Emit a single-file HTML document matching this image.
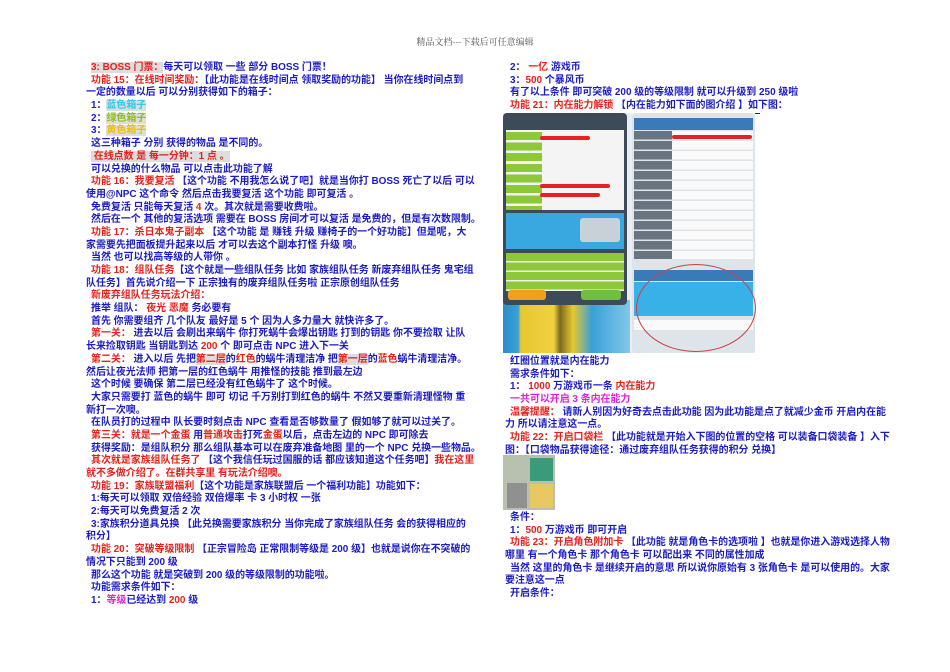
<!DOCTYPE html>
<html><head><meta charset="utf-8"><style>
body{margin:0;background:#fff;width:950px;height:672px;overflow:hidden;position:relative;font-family:"Liberation Sans","Noto Sans CJK SC",sans-serif;}
.hd{position:absolute;top:35px;left:0;width:950px;text-align:center;font:9px "Noto Serif CJK SC",serif;color:#555}
.col{position:absolute;font-size:9.95px;font-weight:bold;color:#1c1cc4;line-height:12.7px;white-space:nowrap}
.col div{height:12.7px}
.r{color:#e8201c}.m{color:#e020d8}.c{color:#30c8ec;background:#ddd}.g{color:#8cc020;background:#ddd}.y{color:#f0c000;background:#ddd}.hl{background:#ddd}
.i{padding-left:5px}
.bx{position:absolute}
</style></head><body>
<div class="hd">精品文档---下载后可任意编辑</div>
<div class="col" style="left:86px;top:62px">
<div class="i"><span class="r hl">3: BOSS 门票：</span>每天可以领取 一些 部分 BOSS 门票！</div>
<div class="i"><span class="r">功能 15：在线时间奖励：</span>【此功能是在线时间点 领取奖励的功能】 当你在线时间点到</div>
<div>一定的数量以后 可以分别获得如下的箱子：</div>
<div class="i">1：<span class="c">蓝色箱子</span></div>
<div class="i">2：<span class="g">绿色箱子</span></div>
<div class="i">3：<span class="y">黄色箱子</span></div>
<div class="i">这三种箱子 分别 获得的物品 是不同的。</div>
<div class="i"><span class="r hl">&nbsp;在线点数 是 每一分钟：1 点 。</span></div>
<div class="i">可以兑换的什么物品 可以点击此功能了解</div>
<div class="i"><span class="r">功能 16：我要复活</span> 【这个功能 不用我怎么说了吧】就是当你打 BOSS 死亡了以后 可以</div>
<div>使用@NPC 这个命令 然后点击我要复活 这个功能 即可复活 。</div>
<div class="i">免费复活 只能每天复活 <span class="r">4</span> 次。其次就是需要收费啦。</div>
<div class="i">然后在一个 其他的复活选项 需要在 BOSS 房间才可以复活 是免费的，但是有次数限制。</div>
<div class="i"><span class="r">功能 17：杀日本鬼子副本</span> 【这个功能 是 赚钱 升级 赚椅子的一个好功能】但是呢，大</div>
<div>家需要先把面板提升起来以后 才可以去这个副本打怪 升级 噢。</div>
<div class="i">当然 也可以找高等级的人带你 。</div>
<div class="i"><span class="r">功能 18：组队任务</span>【这个就是一些组队任务 比如 家族组队任务 新废弃组队任务 鬼宅组</div>
<div>队任务】首先说介绍一下 正宗独有的废弃组队任务啦 正宗原创组队任务</div>
<div class="i"><span class="r">新废弃组队任务玩法介绍：</span></div>
<div class="i">推举 组队： <span class="r">夜光 恶魔</span> 务必要有</div>
<div class="i">首先 你需要组齐 几个队友 最好是 5 个 因为人多力量大 就快许多了。</div>
<div class="i"><span class="r">第一关：</span> 进去以后 会刷出来蜗牛 你打死蜗牛会爆出钥匙 打到的钥匙 你不要捡取 让队</div>
<div>长来捡取钥匙 当钥匙到达 <span class="r">200</span> 个 即可点击 NPC 进入下一关</div>
<div class="i"><span class="r">第二关：</span> 进入以后 先把<span class="r hl">第二层</span>的<span class="r">红色</span>的蜗牛清理洁净 把<span class="r hl">第一层</span>的<span class="r">蓝色</span>蜗牛清理洁净。</div>
<div>然后让夜光法师 把第一层的红色蜗牛 用推怪的技能 推到最左边</div>
<div class="i">这个时候 要确保 第二层已经没有红色蜗牛了 这个时候。</div>
<div class="i">大家只需要打 蓝色的蜗牛 即可 切记 千万别打到红色的蜗牛 不然又要重新清理怪物 重</div>
<div>新打一次噢。</div>
<div class="i">在队员打的过程中 队长要时刻点击 NPC 查看是否够数量了 假如够了就可以过关了。</div>
<div class="i"><span class="r">第三关：就是一个金蛋</span> 用<span class="r">普通攻击</span>打死<span class="r">金蛋</span>以后，点击左边的 NPC 即可除去</div>
<div class="i">获得奖励：是组队积分 那么组队基本可以在废弃准备地图 里的一个 NPC 兑换一些物品。</div>
<div class="i"><span class="r">其次就是家族组队任务了</span> 【这个我信任玩过国服的话 都应该知道这个任务吧】<span class="r">我在这里</span></div>
<div class="r">就不多做介绍了。在群共享里 有玩法介绍噢。</div>
<div class="i"><span class="r">功能 19：家族联盟福利</span>【这个功能是家族联盟后 一个福利功能】功能如下：</div>
<div class="i">1:每天可以领取 双倍经验 双倍爆率 卡 3 小时权 一张</div>
<div class="i">2:每天可以免费复活 2 次</div>
<div class="i">3:家族积分道具兑换 【此兑换需要家族积分 当你完成了家族组队任务 会的获得相应的</div>
<div>积分】</div>
<div class="i"><span class="r">功能 20：突破等级限制</span> 【正宗冒险岛 正常限制等级是 200 级】也就是说你在不突破的</div>
<div>情况下只能到 200 级</div>
<div class="i">那么这个功能 就是突破到 200 级的等级限制的功能啦。</div>
<div class="i">功能需求条件如下：</div>
<div class="i">1：<span class="m">等级</span>已经达到 <span class="r">200</span> 级</div>
</div>

<div class="col" style="left:505px;top:62px">
<div class="i">2： <span class="r">一亿</span> 游戏币</div>
<div class="i">3：<span class="r">500</span> 个暴风币</div>
<div class="i">有了以上条件 即可突破 200 级的等级限制 就可以升级到 250 级啦</div>
<div class="i" style="border-bottom:1px solid #1c1cc4;width:250px"><span class="r">功能 21：内在能力解锁</span> 【内在能力如下面的图介绍 】如下图：</div>
</div>

<!-- game screenshot -->
<div class="bx" style="left:503px;top:113px;width:252px;height:240px;background:#e8eef2"></div>
<div class="bx" style="left:503px;top:300px;width:127px;height:53px;background:linear-gradient(90deg,#2a8ec8 0,#3aa0d8 12%,#e8c830 14%,#f0d040 40%,#7a6a20 45%,#e8c830 55%,#3aa0d8 70%,#80c8e8 100%)"></div>
<div class="bx" style="left:503px;top:113px;width:124px;height:192px;background:#3d4a58;border-radius:4px"></div>
<div class="bx" style="left:506px;top:130px;width:118px;height:80px;background:#f4f4f4"></div>
<div class="bx" style="left:506px;top:132px;width:36px;height:78px;background:repeating-linear-gradient(#8cc838 0,#8cc838 8px,#f4f4f4 8px,#f4f4f4 10.6px)"></div>
<div class="bx" style="left:540px;top:136px;width:50px;height:4px;background:#e82020;border-radius:2px"></div>
<div class="bx" style="left:540px;top:184px;width:70px;height:4px;background:#e82020;border-radius:2px"></div>
<div class="bx" style="left:540px;top:193px;width:60px;height:4px;background:#e82020;border-radius:2px"></div>
<div class="bx" style="left:506px;top:213px;width:118px;height:36px;background:#3aa8e0"></div>
<div class="bx" style="left:580px;top:218px;width:40px;height:24px;background:#c8d0d8;border-radius:3px"></div>
<div class="bx" style="left:506px;top:253px;width:118px;height:38px;background:repeating-linear-gradient(#8cc838 0,#8cc838 8px,#f4f4f4 8px,#f4f4f4 9.5px)"></div>
<div class="bx" style="left:508px;top:290px;width:38px;height:10px;background:#f0a020;border-radius:3px"></div>
<div class="bx" style="left:581px;top:290px;width:40px;height:10px;background:#70c040;border-radius:3px"></div>
<div class="bx" style="left:632px;top:113px;width:123px;height:240px;background:#dde4ea;border-radius:4px"></div>
<div class="bx" style="left:634px;top:118px;width:119px;height:12px;background:#3a7ab8"></div>
<div class="bx" style="left:634px;top:131px;width:119px;height:128px;background:repeating-linear-gradient(90deg,#6a7480 0,#6a7480 38px,#fafafa 38px,#fafafa 119px)"></div>
<div class="bx" style="left:634px;top:131px;width:119px;height:128px;background:repeating-linear-gradient(transparent 0,transparent 8.5px,#dde4ea 8.5px,#dde4ea 10px)"></div>
<div class="bx" style="left:672px;top:135px;width:80px;height:4px;background:#e82020;border-radius:2px"></div>
<div class="bx" style="left:634px;top:270px;width:119px;height:11px;background:#3a7ab8"></div>
<div class="bx" style="left:634px;top:282px;width:119px;height:34px;background:#38b0e8"></div>
<div class="bx" style="left:634px;top:320px;width:119px;height:10px;background:#fafafa"></div>
<div class="bx" style="left:636px;top:264px;width:118px;height:86px;border:1px solid #d04040;border-radius:50%"></div>

<div class="col" style="left:505px;top:356px">
<div class="i">红圈位置就是内在能力</div>
<div class="i">需求条件如下：</div>
<div class="i">1： <span class="r">1000</span> 万游戏币一条 <span class="r">内在能力</span></div>
<div class="i m">一共可以开启 3 条内在能力</div>
<div class="i"><span class="r">温馨提醒：</span> 请新人别因为好奇去点击此功能 因为此功能是点了就减少金币 开启内在能</div>
<div>力 所以请注意这一点。</div>
<div class="i"><span class="r">功能 22：开启口袋栏</span> 【此功能就是开始入下图的位置的空格 可以装备口袋装备 】入下</div>
<div>图：【口袋物品获得途径：通过废弃组队任务获得的积分 兑换】</div>
</div>
<div class="bx" style="left:503px;top:455px;width:52px;height:55px;background:#b8c0b0"></div>
<div class="bx" style="left:507px;top:483px;width:20px;height:25px;background:#909090"></div>
<div class="bx" style="left:530px;top:458px;width:23px;height:23px;background:#3a9a7a"></div>
<div class="bx" style="left:530px;top:484px;width:23px;height:24px;background:#e8c860"></div>
<div class="col" style="left:505px;top:512px">
<div class="i">条件：</div>
<div class="i">1：<span class="r">500</span> 万游戏币 即可开启</div>
<div class="i"><span class="r">功能 23：开启角色附加卡</span> 【此功能 就是角色卡的选项啦 】也就是你进入游戏选择人物</div>
<div>哪里 有一个角色卡 那个角色卡 可以配出来 不同的属性加成</div>
<div class="i">当然 这里的角色卡 是继续开启的意思 所以说你原始有 3 张角色卡 是可以使用的。大家</div>
<div>要注意这一点</div>
<div class="i">开启条件：</div>
</div>
</body></html>
